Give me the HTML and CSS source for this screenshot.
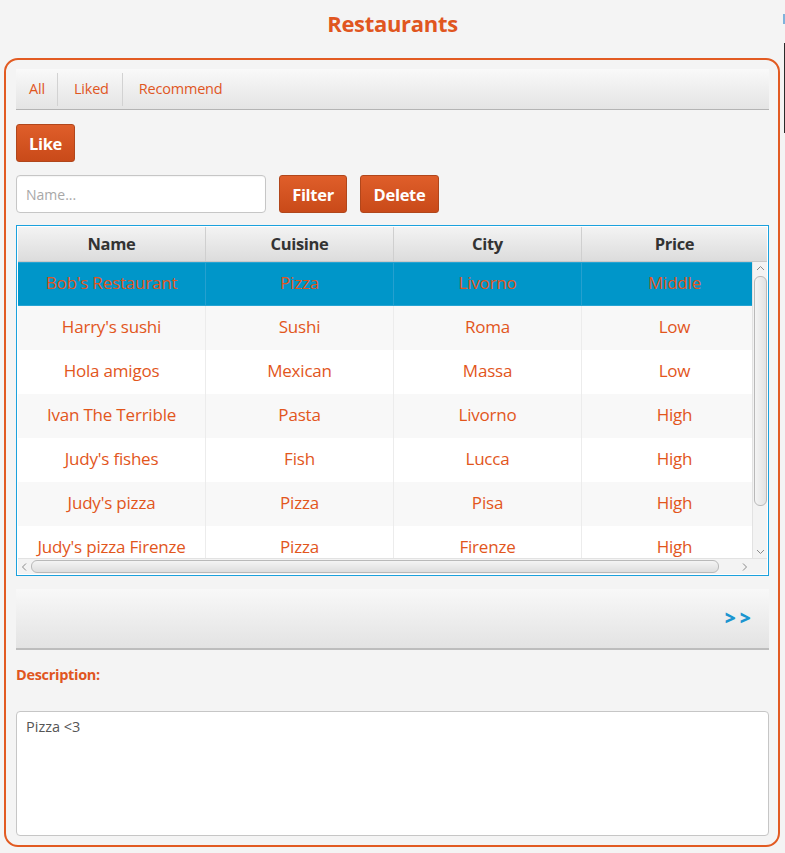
FILE: index.html
```html
<!DOCTYPE html>
<html>
<head>
<meta charset="utf-8">
<link rel="stylesheet" href="styles.css">
</head>
<body>
<div class="edge"><span class="edge-blue"></span><span class="edge-dark"></span></div>
<h1 class="title">Restaurants</h1>
<div class="panel">
  <div class="tabs">
    <span class="tab">All</span>
    <span class="tab">Liked</span>
    <span class="tab">Recommend</span>
  </div>
  <div class="row-like"><button class="btn">Like</button></div>
  <div class="row-filter">
    <input class="name-input" type="text" placeholder="Name...">
    <button class="btn">Filter</button>
    <button class="btn">Delete</button>
  </div>
  <div class="table">
    <div class="thead">
      <div class="th">Name</div>
      <div class="th">Cuisine</div>
      <div class="th">City</div>
      <div class="th">Price</div>
    </div>
    <div class="tbody">
      <div class="viewport">
        <div class="tr selected"><div class="td">Bob's Restaurant</div><div class="td">Pizza</div><div class="td">Livorno</div><div class="td">Middle</div></div>
        <div class="tr odd"><div class="td">Harry's sushi</div><div class="td">Sushi</div><div class="td">Roma</div><div class="td">Low</div></div>
        <div class="tr"><div class="td">Hola amigos</div><div class="td">Mexican</div><div class="td">Massa</div><div class="td">Low</div></div>
        <div class="tr odd"><div class="td">Ivan The Terrible</div><div class="td">Pasta</div><div class="td">Livorno</div><div class="td">High</div></div>
        <div class="tr"><div class="td">Judy's fishes</div><div class="td">Fish</div><div class="td">Lucca</div><div class="td">High</div></div>
        <div class="tr odd"><div class="td">Judy's pizza</div><div class="td">Pizza</div><div class="td">Pisa</div><div class="td">High</div></div>
        <div class="tr"><div class="td">Judy's pizza Firenze</div><div class="td">Pizza</div><div class="td">Firenze</div><div class="td">High</div></div>
      </div>
      <div class="vscroll">
        <svg class="arrow" width="15" height="12" viewBox="0 0 15 12"><polyline points="4,8 7.5,4.5 11,8" fill="none" stroke="#8a8a8a" stroke-width="1"/></svg>
        <div class="vthumb"></div>
        <svg class="arrow" width="15" height="12" viewBox="0 0 15 12"><polyline points="4,4 7.5,7.5 11,4" fill="none" stroke="#8a8a8a" stroke-width="1"/></svg>
      </div>
    </div>
    <div class="hscroll">
      <svg class="harrow" width="12" height="16" viewBox="0 0 12 16"><polyline points="8,4.5 4.5,8 8,11.5" fill="none" stroke="#8a8a8a" stroke-width="1"/></svg>
      <div class="hthumb"></div>
      <svg class="harrow" width="12" height="16" viewBox="0 0 12 16"><polyline points="4,4.5 7.5,8 4,11.5" fill="none" stroke="#8a8a8a" stroke-width="1"/></svg>
      <div class="corner"></div>
    </div>
  </div>
  <div class="toolbar"><span class="next">&gt;&gt;</span></div>
  <div class="desc-label">Description:</div>
  <div class="desc-box">Pizza &lt;3</div>
</div>
</body>
</html>
```

FILE: styles.css
```css
* { box-sizing: border-box; }
html, body { margin: 0; padding: 0; }
body {
  background: #f4f4f4;
  font-family: "Open Sans", "Noto Sans", sans-serif;
  width: 785px;
  height: 853px;
  overflow: hidden;
  position: relative;
}
.edge { position: absolute; right: 0; top: 0; width: 2px; height: 140px; }
.edge-blue { position: absolute; left: 0; top: 14px; width: 2px; height: 10px; background: #7fb3db; }
.edge-dark { position: absolute; left: 1px; top: 43px; width: 1px; height: 90px; background: #2b2b2b; }
.title {
  margin: 0;
  height: 58px;
  padding-top: 8px;
  text-align: center;
  font-size: 22px;
  line-height: 30px;
  font-weight: 700;
  color: #e0561f;
  letter-spacing: -0.3px;
}
.panel {
  margin: 0 5px 0 4px;
  height: 789px;
  border: 2px solid #e25b22;
  border-radius: 14px;
  padding: 9px 9px 9px 10px;
  display: flex;
  flex-direction: column;
}
.tabs {
  height: 41px;
  background: linear-gradient(#f9f9f9, #e4e4e4);
  border-bottom: 1px solid #b4b4b4;
  display: flex;
  align-items: stretch;
  padding: 4px 0 3px 0;
}
.tab {
  display: flex;
  align-items: center;
  font-size: 14.5px;
  color: #e0561f;
  padding: 0 13px 0 16px;
  border-right: 1px solid #d2d2d2;
  letter-spacing: -0.2px;
  padding-bottom: 2px;
}
.tab:first-child { padding-left: 13px; padding-right: 12px; }
.tab:last-child { border-right: none; }
.row-like { margin-top: 14px; height: 38px; display: flex; }
.btn {
  height: 38px;
  border: 1px solid #b1461b;
  border-radius: 3px;
  background: linear-gradient(#df5e2a, #c94a19);
  color: #fff;
  font-family: "Open Sans", "Noto Sans", sans-serif;
  font-weight: 700;
  font-size: 16.5px;
  padding: 0 12px;
  letter-spacing: -0.3px;
}
.row-like .btn { width: 59px; padding: 0; }
.row-filter { margin-top: 13px; height: 38px; display: flex; gap: 13px; }
.name-input {
  width: 250px;
  height: 38px;
  border: 1px solid #c6c6c6;
  border-radius: 4px;
  background: #fff;
  font-family: "Open Sans", "Noto Sans", sans-serif;
  font-size: 14px;
  padding: 0 9px;
  box-shadow: inset 0 1px 1px rgba(0,0,0,0.04);
}
.name-input::placeholder { color: #a8a8a8; }
.row-filter .btn:nth-of-type(1) { width: 68px; padding: 0; }
.row-filter .btn:nth-of-type(2) { width: 79px; padding: 0; }
.table {
  margin-top: 12px;
  height: 351px;
  border: 1px solid #1ba1dd;
  padding: 1px;
  display: flex;
  flex-direction: column;
  background: #fff;
}
.thead {
  height: 35px;
  display: flex;
  background: linear-gradient(#f3f3f3, #dcdcdc);
  border-bottom: 1px solid #c8c8c8;
}
.th {
  width: 188px;
  flex: none;
  display: flex;
  align-items: center;
  justify-content: center;
  font-size: 16.5px;
  font-weight: 700;
  color: #333;
  border-right: 1px solid #cfcfcf;
  letter-spacing: -0.3px;
  padding-bottom: 1px;
}
.th:last-child { width: 185px; border-right: none; }
.tbody { height: 296px; display: flex; }
.viewport { width: 734px; overflow: hidden; flex: none; }
.tr { width: 749px; height: 44px; display: flex; background: #fff; }
.tr.odd { background: #f8f8f8; }
.tr.selected { background: #0096c9; border-top: 1px solid #26a4d3; border-bottom: 1px solid #26a4d3; }
.td {
  width: 188px;
  flex: none;
  display: flex;
  align-items: center;
  justify-content: center;
  font-size: 17px;
  color: #e2561c;
  border-right: 1px solid #ececec;
  letter-spacing: -0.2px;
  white-space: nowrap;
  padding-bottom: 4px;
}
.tr.selected .td { border-right-color: #25a0cf; }
.td:last-child { width: 185px; border-right: none; }
.vscroll {
  width: 15px;
  flex: none;
  background: #f3f3f3;
  border-left: 1px solid #e2e2e2;
  display: flex;
  flex-direction: column;
  align-items: center;
}
.arrow { flex: none; }
.vthumb {
  width: 13px;
  height: 230px;
  margin-top: 2px;
  border: 1px solid #b9b9b9;
  border-radius: 6px;
  background: linear-gradient(90deg, #f4f4f4, #e2e2e2);
}
.vscroll .arrow:last-child { margin-top: auto; }
.hscroll {
  height: 16px;
  display: flex;
  align-items: center;
  background: #f3f3f3;
  border-top: 1px solid #e2e2e2;
}
.harrow { flex: none; }
.hthumb {
  width: 688px;
  height: 13px;
  margin-left: 1px;
  border: 1px solid #b9b9b9;
  border-radius: 6px;
  background: linear-gradient(#f4f4f4, #dedede);
}
.hthumb + .harrow { margin-left: 20px; }
.corner { flex: 1; }
.toolbar {
  margin-top: 13px;
  height: 61px;
  background: linear-gradient(#f8f8f8, #e3e3e3);
  border-bottom: 2px solid #bdbdbd;
  display: flex;
  align-items: center;
  justify-content: flex-end;
  padding-right: 14px;
}
.next {
  font-size: 19px;
  font-weight: 800;
  color: #1b95d0;
  letter-spacing: 4px;
  padding-bottom: 2px;
}
.desc-label {
  margin-top: 15px;
  height: 20px;
  line-height: 20px;
  font-size: 14.5px;
  font-weight: 700;
  color: #e0561f;
  letter-spacing: -0.3px;
}
.desc-box {
  margin-top: 26px;
  height: 125px;
  background: #fff;
  border: 1px solid #c6c6c6;
  border-radius: 4px;
  padding: 5px 9px;
  font-size: 14.5px;
  line-height: 20px;
  color: #555;
}
```
